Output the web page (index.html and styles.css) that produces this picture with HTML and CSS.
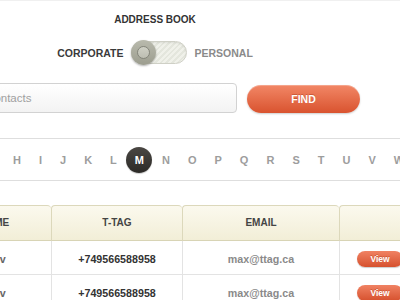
FILE: index.html
```html
<!DOCTYPE html>
<html>
<head>
<meta charset="utf-8">
<link rel="stylesheet" href="styles.css">
</head>
<body>
<div class="top">
  <h1 class="title">ADDRESS BOOK</h1>
  <div class="mode">
    <span class="mode-label on">CORPORATE</span>
    <span class="switch"><span class="knob"><span class="knob-dot"></span></span></span>
    <span class="mode-label">PERSONAL</span>
  </div>
</div>
<form class="search">
  <input class="search-input" type="text" placeholder="Search contacts">
  <button class="find" type="button">FIND</button>
</form>
<nav class="alpha">
  <span>H</span><span>I</span><span>J</span><span>K</span><span>L</span><span class="active">M</span><span>N</span><span>O</span><span>P</span><span>Q</span><span>R</span><span>S</span><span>T</span><span>U</span><span>V</span><span>W</span>
</nav>
<table class="contacts">
  <colgroup><col class="c1"><col class="c2"><col class="c3"><col class="c4"></colgroup>
  <thead>
    <tr><th>NAME</th><th>T-TAG</th><th>EMAIL</th><th></th></tr>
  </thead>
  <tbody>
    <tr><td class="name">Max Ivanov</td><td class="tag">+749566588958</td><td class="mail">max@ttag.ca</td><td class="act"><button class="view" type="button">View</button></td></tr>
    <tr><td class="name">Max Ivanov</td><td class="tag">+749566588958</td><td class="mail">max@ttag.ca</td><td class="act"><button class="view" type="button">View</button></td></tr>
  </tbody>
</table>
</body>
</html>
```

FILE: styles.css
```css
html, body {
  margin: 0;
  padding: 0;
}
body {
  width: 400px;
  height: 300px;
  overflow: hidden;
  background: #fff;
  border-top: 1px solid #f0f0f0;
  box-sizing: border-box;
  font-family: "Liberation Sans", Arial, sans-serif;
  padding-top: 13px;
}
.top {
  width: 310px;
  display: flex;
  flex-direction: column;
  align-items: center;
}
.title {
  margin: 0;
  font-size: 10px;
  line-height: 12px;
  font-weight: 700;
  color: #333;
}
.mode {
  margin-top: 14px;
  display: flex;
  align-items: center;
  gap: 8px;
  height: 25px;
}
.mode-label {
  font-size: 10.5px;
  font-weight: 700;
  color: #8a8a8a;
}
.mode-label.on {
  color: #3a3a3a;
}
.switch {
  width: 56px;
  height: 23px;
  box-sizing: border-box;
  border-radius: 12px;
  border: 1px solid #cfd0c6;
  background: repeating-linear-gradient(135deg, #f0f1ea 0 2px, #e4e6dd 2px 4px);
  box-shadow: inset 0 1px 2px rgba(0,0,0,0.08);
  display: flex;
  align-items: center;
  margin-right: -1px;
}
.knob {
  width: 25px;
  height: 25px;
  margin-left: -1px;
  border-radius: 50%;
  background: linear-gradient(#b9baad, #9c9d8f);
  box-shadow: 0 1px 2px rgba(0,0,0,0.3);
  display: flex;
  align-items: center;
  justify-content: center;
}
.knob-dot {
  width: 11px;
  height: 11px;
  border-radius: 50%;
  background: linear-gradient(#cfd0c5, #bdbeb2);
  border: 1px solid #84857a;
}
.search {
  margin: 18px 0 0 -62px;
  display: flex;
  align-items: flex-end;
  gap: 10px;
}
.search-input {
  width: 299px;
  height: 30px;
  box-sizing: border-box;
  margin: 0;
  border: 1px solid #d2d2d2;
  border-radius: 4px;
  background: linear-gradient(#ffffff, #f3f3f3);
  padding: 0 10px;
  font-family: "Liberation Sans", Arial, sans-serif;
  font-size: 11.5px;
  color: #555;
  outline: none;
}
.search-input::placeholder {
  color: #a0a0a0;
}
.find {
  width: 113px;
  height: 28px;
  margin: 0;
  border: none;
  border-radius: 14px;
  background: linear-gradient(#f28766, #d9532f);
  box-shadow: 0 1px 2px rgba(0,0,0,0.2), inset 0 1px 0 rgba(255,255,255,0.25);
  color: #fff;
  font-family: "Liberation Sans", Arial, sans-serif;
  font-size: 10.5px;
  font-weight: 700;
  text-shadow: 0 -1px 0 rgba(150,40,10,0.35);
  padding: 0;
}
.alpha {
  margin-top: 25px;
  height: 43px;
  border-top: 1px solid #dedede;
  border-bottom: 1px solid #dedede;
  display: flex;
  align-items: center;
  gap: 18px;
  padding-left: 13px;
  width: 400px;
  box-sizing: border-box;
}
.alpha span {
  font-size: 11px;
  font-weight: 700;
  color: #9d9d9d;
  position: relative;
  flex: none;
}
.alpha .active {
  color: #fff;
  z-index: 0;
}
.alpha .active::before {
  content: "";
  position: absolute;
  left: 50%;
  top: 50%;
  width: 26px;
  height: 26px;
  margin: -13px 0 0 -13px;
  border-radius: 50%;
  background: linear-gradient(#4a4743, #2c2a27);
  box-shadow: 0 1px 1px rgba(0,0,0,0.2);
  z-index: -1;
}
.contacts {
  margin: 24px 0 0 -62px;
  width: 481px;
  table-layout: fixed;
  border-collapse: separate;
  border-spacing: 0;
  font-family: "Liberation Sans", Arial, sans-serif;
}
.c1 { width: 113px; }
.c2 { width: 131px; }
.c3 { width: 157px; }
.c4 { width: 80px; }
.contacts th {
  padding: 10px 0;
  line-height: 14px;
  font-size: 10px;
  font-weight: 700;
  color: #444;
  text-align: center;
  background: linear-gradient(#fbf9ee, #f2eed7);
  border-top: 1px solid #dcd8bb;
  border-bottom: 1px solid #d8d4b5;
  border-left: 1px solid #dcd8bb;
  border-radius: 4px 4px 0 0;
}
.contacts th:first-child {
  border-left: none;
}
.contacts td {
  padding: 10px 0 7px;
  line-height: 16px;
  font-size: 10.7px;
  font-weight: 700;
  text-align: center;
  border-bottom: 1px solid #e3e3e3;
  border-left: 1px solid #e3e3e3;
  white-space: nowrap;
}
.contacts td.name {
  border-left: none;
  text-align: left;
  padding-left: 10px;
  color: #666;
}
.contacts td.tag {
  color: #333;
}
.contacts td.mail {
  color: #8a8a8a;
}
.contacts td.act {
  text-align: left;
  padding-left: 17px;
}
.view {
  display: block;
  width: 46px;
  height: 16px;
  margin: 0;
  padding: 0;
  border: none;
  border-radius: 8px;
  background: linear-gradient(#f08263, #d6512e);
  box-shadow: 0 1px 1px rgba(0,0,0,0.2);
  color: #fff;
  font-family: "Liberation Sans", Arial, sans-serif;
  font-size: 8.5px;
  font-weight: 700;
  line-height: 16px;
  text-shadow: 0 -1px 0 rgba(150,40,10,0.35);
}
```
